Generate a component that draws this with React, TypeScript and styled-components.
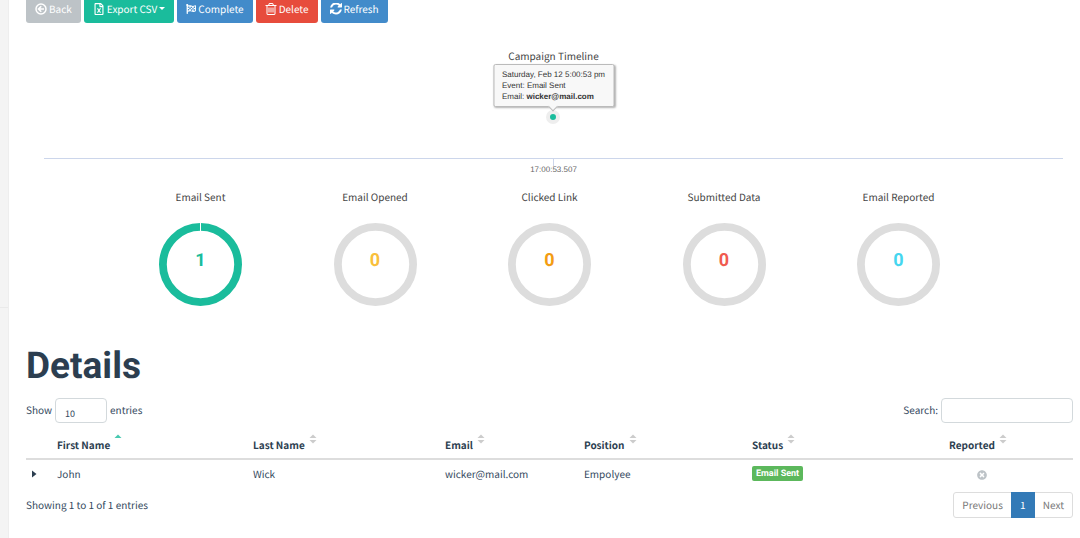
import React from 'react';
import styled, { createGlobalStyle } from 'styled-components';
import { FaFlagCheckered, FaRegFileExcel, FaTimesCircle } from 'react-icons/fa';

const GlobalStyle = createGlobalStyle`
  *, *::before, *::after { box-sizing: border-box; }
  body {
    margin: 0;
    overflow: hidden;
    background: #fff;
    color: #34495e;
    font-family: 'Noto Sans CJK SC', 'Open Sans', sans-serif;
    font-size: 10px;
    line-height: 16px;
    text-rendering: geometricPrecision;
  }
  button, input, select { font: inherit; color: inherit; text-rendering: inherit; }
`;

const Shell = styled.div`
  display: flex;
  min-height: 100vh;
`;

const Sidebar = styled.aside`
  flex: 0 0 9px;
  padding-top: 307px;
  background: #f4f4f4;
  border-right: 1px solid #eee;
`;

const SidebarRule = styled.hr`
  margin: 0;
  border: 0;
  border-top: 1px solid #eaeaea;
`;

const Main = styled.main`
  flex: 1;
  min-width: 0;
  margin-top: -4px;
  padding: 0 7px 0 17px;
`;

const Toolbar = styled.div`
  display: flex;
  gap: 3px;
`;

const tones = {
  muted: '#bdc3c7',
  success: '#1abc9c',
  primary: '#428bca',
  danger: '#e74c3c',
};

const ToolButton = styled.button<{ $tone: keyof typeof tones }>`
  display: flex;
  align-items: center;
  gap: 2px;
  height: 27px;
  padding: 0 9px 2px;
  border: 0;
  border-radius: 3px;
  background: ${(p) => tones[p.$tone]};
  color: #fff;
  white-space: nowrap;

  svg { display: block; flex: none; }
`;

const Caret = styled.span`
  border: 3px solid transparent;
  border-top-color: currentColor;
  border-bottom: 0;
`;

const Timeline = styled.section`
  margin: 25px 10px 0 18px;
`;

const ChartTitle = styled.h2`
  margin: 0;
  color: #444;
  font-size: 10px;
  font-weight: 400;
  line-height: 16px;
  text-align: center;
`;

const Plot = styled.div`
  position: relative;
  height: 95px;
  border-bottom: 1px solid #ccd6eb;
`;

const EventDot = styled.span`
  position: absolute;
  left: 50%;
  top: 46px;
  width: 14px;
  height: 14px;
  margin-left: -8px;
  border: 4px solid #eee;
  border-radius: 50%;
  background: #1abc9c;
`;

const Tooltip = styled.div`
  position: absolute;
  left: 50%;
  top: 0;
  transform: translateX(-50%);
  padding: 4px 8px;
  border: 1px solid #bbb;
  border-radius: 2px;
  background: #f8f8f8;
  box-shadow: 1px 1px 2px rgba(0, 0, 0, 0.3);
  color: #333;
  font-family: 'Liberation Sans', Arial, sans-serif;
  font-size: 8px;
  line-height: 11px;
  white-space: nowrap;

  &::after {
    content: '';
    position: absolute;
    left: 50%;
    bottom: -4px;
    width: 7px;
    height: 7px;
    margin-left: -4px;
    transform: rotate(45deg);
    border: solid #bbb;
    border-width: 0 1px 1px 0;
    background: #f8f8f8;
  }
`;

const TickLabel = styled.div`
  display: flex;
  flex-direction: column;
  align-items: center;
  color: #666;
  font-family: 'Liberation Sans', Arial, sans-serif;
  font-size: 8px;
  line-height: 8px;

  &::before {
    content: '';
    width: 1px;
    height: 7px;
    background: #ccd6eb;
  }
`;

const Gauges = styled.section`
  display: grid;
  grid-template-columns: repeat(5, 1fr);
  margin-top: 15px;
  padding: 0 calc(100% / 12);
`;

const Gauge = styled.figure`
  display: flex;
  flex-direction: column;
  align-items: center;
  gap: 18px;
  margin: 0;
`;

const GaugeLabel = styled.figcaption`
  color: #444;
`;

const RingBox = styled.div`
  display: grid;
  place-items: center;

  > * { grid-area: 1 / 1; }
`;

const GaugeValue = styled.span<{ $color: string }>`
  padding-bottom: 8px;
  color: ${(p) => p.$color};
  font-family: Roboto, sans-serif;
  font-size: 18px;
  font-weight: 700;
  line-height: 20px;
`;

const Heading = styled.h1`
  margin: 39px 0 0;
  color: #2c3e50;
  font-family: Roboto, sans-serif;
  font-size: 37px;
  font-weight: 700;
  line-height: 44px;
`;

const Controls = styled.div`
  display: flex;
  justify-content: space-between;
  margin-top: 9px;
`;

const Field = styled.label`
  display: flex;
  align-items: flex-start;
  gap: 3px;
  line-height: 23px;
`;

const LengthSelect = styled.select`
  width: 52px;
  height: 25px;
  padding: 6px 9px 0;
  border: 1px solid #d3d9dc;
  border-radius: 4px;
  background: #fff;
  appearance: none;
  font-size: 9px;
  line-height: 16px;
`;

const SearchInput = styled.input`
  width: 132px;
  height: 25px;
  padding: 0 8px;
  border: 1px solid #d3d9dc;
  border-radius: 4px;
  background: #fff;
`;

const Table = styled.table`
  width: 100%;
  margin-top: 6px;
  border-collapse: collapse;
  table-layout: fixed;
`;

const Th = styled.th<{ $width: string; $center?: boolean }>`
  width: ${(p) => p.$width};
  height: 30px;
  padding: 0 6px;
  border-bottom: 2px solid #ddd;
  color: #2c3e50;
  text-align: ${(p) => (p.$center ? 'center' : 'left')};
  vertical-align: top;
`;

const SortButton = styled.button`
  display: inline-flex;
  align-items: flex-start;
  gap: 4px;
  padding: 0 9px 0 0;
  border: 0;
  background: none;
  font-weight: 700;
  white-space: nowrap;

  span { padding-top: 8px; }
  svg { display: block; margin-top: 5px; }
`;

const Td = styled.td<{ $center?: boolean }>`
  height: 28px;
  padding: 0 6px;
  text-align: ${(p) => (p.$center ? 'center' : 'left')};
  color: #34495e;

  svg { display: inline-block; vertical-align: middle; }
`;

const ExpandButton = styled.button`
  display: block;
  padding: 0;
  border: 0;
  background: none;

  svg { display: block; }
`;

const StatusBadge = styled.span`
  display: block;
  width: max-content;
  padding: 1px 4px 0;
  border-radius: 2px;
  background: #5cb85c;
  color: #fff;
  font-family: Roboto, sans-serif;
  font-size: 9px;
  font-weight: 700;
  line-height: 14px;
`;

const Footer = styled.div`
  display: flex;
  justify-content: space-between;
  align-items: center;
  margin-top: 5px;
`;

const Pager = styled.nav`
  display: flex;
  height: 26px;
  border: 1px solid #ddd;
  border-radius: 3px;
`;

const PageLink = styled.a<{ $active?: boolean }>`
  margin: -1px 0;
  padding: 5px 8px;
  min-width: 24px;
  text-align: center;
  background: ${(p) => (p.$active ? '#337ab7' : 'none')};
  color: ${(p) => (p.$active ? '#fff' : '#777')};
  text-decoration: none;
`;

const BackIcon = () => (
  <svg width="12" height="12" viewBox="0 0 24 24" fill="none" stroke="currentColor" strokeWidth="3" aria-hidden="true">
    <circle cx="12" cy="12" r="10" />
    <path d="M18 12H8M12.500 6.500L7 12l5.500 5.500" strokeWidth="3.200" />
  </svg>
);

const TrashIcon = () => (
  <svg width="12" height="12" viewBox="128 128 1536 1536" fill="currentColor" aria-hidden="true">
    <path d="M704 736v576q0 14-9 23t-23 9h-64q-14 0-23-9t-9-23v-576q0-14 9-23t23-9h64q14 0 23 9t9 23zm256 0v576q0 14-9 23t-23 9h-64q-14 0-23-9t-9-23v-576q0-14 9-23t23-9h64q14 0 23 9t9 23zm256 0v576q0 14-9 23t-23 9h-64q-14 0-23-9t-9-23v-576q0-14 9-23t23-9h64q14 0 23 9t9 23zm128 724v-948h-896v948q0 22 7 40.500t14.500 27 10.500 8.500h832q3 0 10.500-8.500t14.500-27 7-40.500zm-672-1076h448l-48-117q-7-9-17-11h-317q-10 2-17 11zm928 32v64q0 14-9 23t-23 9h-96v948q0 83-47 143.500t-113 60.500h-832q-66 0-113-58.500t-47-141.500v-952h-96q-14 0-23-9t-9-23v-64q0-14 9-23t23-9h309l70-167q15-37 54-63t79-26h320q40 0 79 26t54 63l70 167h309q14 0 23 9t9 23z" />
  </svg>
);

const RefreshIcon = () => (
  <svg width="12" height="12" viewBox="0 128 1536 1536" fill="currentColor" aria-hidden="true">
    <path d="M1511 928q0 5-1 7-64 268-268 434.500t-478 166.500q-146 0-282.500-55t-243.500-157l-129 129q-19 19-45 19t-45-19-19-45v-448q0-26 19-45t45-19h448q26 0 45 19t19 45-19 45l-137 137q71 66 161 102t187 36q134 0 250-65t186-179q11-17 53-117 8-23 30-23h192q13 0 22.500 9.500t9.500 22.500zm25-800v448q0 26-19 45t-45 19h-448q-26 0-45-19t-19-45 19-45l138-138q-148-137-349-137-134 0-250 65t-186 179q-11 17-53 117-8 23-30 23h-199q-13 0-22.500-9.500t-9.500-22.500v-7q65-268 270-434.500t480-166.500q146 0 284 55.500t245 156.500l130-129q19-19 45-19t45 19 19 45z" transform="translate(0 64)" />
  </svg>
);

const SortIcon = ({ ascending }: { ascending?: boolean }) => (
  <svg width="8" height="10" viewBox="0 0 8 10" aria-hidden="true">
    <path d="M0.500 4L4 0.500 7.500 4z" fill={ascending ? '#48c9b0' : '#ccc'} />
    {!ascending && <path d="M0.500 6h7L4 9.500z" fill="#ccc" />}
  </svg>
);

const Ring = ({ filled }: { filled?: boolean }) => (
  <svg width="83" height="83" viewBox="0 0 83 83" aria-hidden="true">
    <circle cx="41.500" cy="41.500" r="37.600" fill="none" stroke={filled ? '#1abc9c' : '#ddd'} strokeWidth="7.800" />
    {filled && <path d="M41.500 0v8" stroke="#fff" strokeWidth="1" />}
  </svg>
);

const gauges = [
  { label: 'Email Sent', value: 1, color: '#1abc9c' },
  { label: 'Email Opened', value: 0, color: '#f9bf3b' },
  { label: 'Clicked Link', value: 0, color: '#f39c12' },
  { label: 'Submitted Data', value: 0, color: '#f05b4f' },
  { label: 'Email Reported', value: 0, color: '#45d6ef' },
];

const expandShare = 25;

const columns = [
  { label: 'First Name', share: 196 },
  { label: 'Last Name', share: 192 },
  { label: 'Email', share: 139 },
  { label: 'Position', share: 168 },
  { label: 'Status', share: 146 },
  { label: 'Reported', share: 181 },
];

const shareTotal = columns.reduce((sum, c) => sum + c.share, expandShare);
const toPercent = (share: number) => `${(share / shareTotal) * 100}%`;

export default function App() {
  return (
    <>
      <GlobalStyle />
      <Shell>
        <Sidebar><SidebarRule /></Sidebar>
        <Main>
          <Toolbar>
            <ToolButton $tone="muted"><BackIcon />Back</ToolButton>
            <ToolButton $tone="success"><FaRegFileExcel size={12} />Export CSV<Caret /></ToolButton>
            <ToolButton $tone="primary"><FaFlagCheckered size={10} />Complete</ToolButton>
            <ToolButton $tone="danger"><TrashIcon />Delete</ToolButton>
            <ToolButton $tone="primary"><RefreshIcon />Refresh</ToolButton>
          </Toolbar>

          <Timeline>
            <ChartTitle>Campaign Timeline</ChartTitle>
            <Plot>
              <EventDot />
              <Tooltip role="tooltip">
                Saturday, Feb 12 5:00:53 pm<br />
                Event: Email Sent<br />
                Email: <b>wicker@mail.com</b>
              </Tooltip>
            </Plot>
            <TickLabel>17:00:53.507</TickLabel>
          </Timeline>

          <Gauges>
            {gauges.map((g) => (
              <Gauge key={g.label}>
                <GaugeLabel>{g.label}</GaugeLabel>
                <RingBox>
                  <Ring filled={g.value > 0} />
                  <GaugeValue $color={g.color}>{g.value}</GaugeValue>
                </RingBox>
              </Gauge>
            ))}
          </Gauges>

          <Heading>Details</Heading>
          <Controls>
            <Field>
              Show
              <LengthSelect defaultValue="10">
                <option>10</option>
                <option>25</option>
                <option>50</option>
              </LengthSelect>
              entries
            </Field>
            <Field>
              Search:
              <SearchInput type="search" />
            </Field>
          </Controls>

          <Table>
            <thead>
              <tr>
                <Th $width={toPercent(expandShare)} aria-label="Expand" />
                {columns.map((c, i) => (
                  <Th key={c.label} $width={toPercent(c.share)} $center={c.label === 'Reported'}>
                    <SortButton><span>{c.label}</span><SortIcon ascending={i === 0} /></SortButton>
                  </Th>
                ))}
              </tr>
            </thead>
            <tbody>
              <tr>
                <Td>
                  <ExpandButton aria-label="Show details">
                    <svg width="5" height="8" viewBox="0 0 5 8" aria-hidden="true"><path d="M0 0.500L4.500 4 0 7.500z" fill="#2c3e50" /></svg>
                  </ExpandButton>
                </Td>
                <Td>John</Td>
                <Td>Wick</Td>
                <Td>wicker@mail.com</Td>
                <Td>Empolyee</Td>
                <Td><StatusBadge>Email Sent</StatusBadge></Td>
                <Td $center><FaTimesCircle size={10} color="#bdc3c7" /></Td>
              </tr>
            </tbody>
          </Table>

          <Footer>
            <span>Showing 1 to 1 of 1 entries</span>
            <Pager aria-label="Table pages">
              <PageLink href="#previous">Previous</PageLink>
              <PageLink href="#page-1" $active>1</PageLink>
              <PageLink href="#next">Next</PageLink>
            </Pager>
          </Footer>
        </Main>
      </Shell>
    </>
  );
}
